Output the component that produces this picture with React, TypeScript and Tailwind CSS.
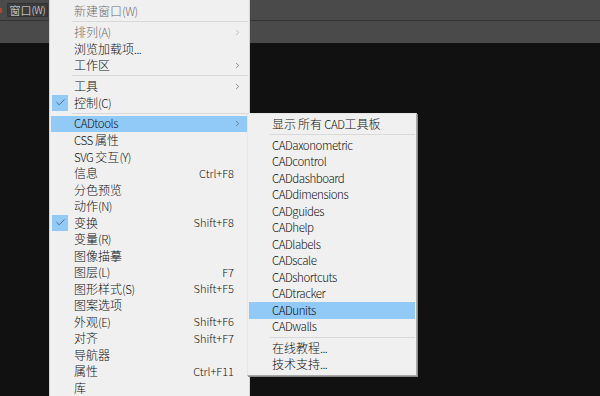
import { Check, ChevronRight } from "lucide-react";

type Item =
  | "sep"
  | {
      label: string;
      shortcut?: string;
      arrow?: boolean;
      disabled?: boolean;
      checked?: boolean;
      active?: boolean;
    };

const mainItems: Item[] = [
  { label: "新建窗口(W)", disabled: true },
  "sep",
  { label: "排列(A)", disabled: true, arrow: true },
  { label: "浏览加载项..." },
  { label: "工作区", arrow: true },
  "sep",
  { label: "工具", arrow: true },
  { label: "控制(C)", checked: true },
  "sep",
  { label: "CADtools", arrow: true, active: true },
  { label: "CSS 属性" },
  { label: "SVG 交互(Y)" },
  { label: "信息", shortcut: "Ctrl+F8" },
  { label: "分色预览" },
  { label: "动作(N)" },
  { label: "变换", shortcut: "Shift+F8", checked: true },
  { label: "变量(R)" },
  { label: "图像描摹" },
  { label: "图层(L)", shortcut: "F7" },
  { label: "图形样式(S)", shortcut: "Shift+F5" },
  { label: "图案选项" },
  { label: "外观(E)", shortcut: "Shift+F6" },
  { label: "对齐", shortcut: "Shift+F7" },
  { label: "导航器" },
  { label: "属性", shortcut: "Ctrl+F11" },
  { label: "库" },
];

const subItems: Item[] = [
  { label: "显示 所有 CAD工具板" },
  "sep",
  { label: "CADaxonometric" },
  { label: "CADcontrol" },
  { label: "CADdashboard" },
  { label: "CADdimensions" },
  { label: "CADguides" },
  { label: "CADhelp" },
  { label: "CADlabels" },
  { label: "CADscale" },
  { label: "CADshortcuts" },
  { label: "CADtracker" },
  { label: "CADunits", active: true },
  { label: "CADwalls" },
  "sep",
  { label: "在线教程..." },
  { label: "技术支持..." },
];

// CJK runs at 12px, latin runs a bit smaller and tighter (like YaHei UI)
function Label({ text }: { text: string }) {
  const parts = text.split(/([\u3000-\u9fff\uff00-\uffef]+)/).filter(Boolean);
  return (
    <>
      {parts.map((p, i) =>
        /[\u3000-\u9fff\uff00-\uffef]/.test(p) ? (
          <span key={i} className="text-[12px]">
            {p}
          </span>
        ) : (
          <span key={i} className="text-[11.5px] tracking-[-0.45px]">
            {p}
          </span>
        ),
      )}
    </>
  );
}

function MenuList({ items }: { items: Item[] }) {
  return (
    <>
      {items.map((item, i) => {
        if (item === "sep") {
          return (
            <div key={i} className="flex h-[4.5px] items-center pl-[22px] pr-[1px]">
              <div className="h-px w-full bg-[#d9d9d9]" />
            </div>
          );
        }
        return (
          <div
            key={i}
            className={`mx-[1px] flex h-[16.5px] items-center ${
              item.active ? "bg-[#91c9f7]" : ""
            } ${item.disabled ? "text-[#6d6d6d]" : "text-[#111]"}`}
          >
            <div className="flex w-[23px] justify-start pl-[1px]">
              {item.checked && (
                <div className="flex h-[16px] w-[16px] items-center justify-center bg-[#91c9f7]">
                  <Check size={11} strokeWidth={1.75} className="text-[#3d5670]" />
                </div>
              )}
            </div>
            <span className="flex-1 whitespace-nowrap">
              <Label text={item.label} />
            </span>
            {item.shortcut && (
              <span className="pr-[14px] text-[11px] whitespace-nowrap">{item.shortcut}</span>
            )}
            {item.arrow && (
              <ChevronRight
                size={9}
                strokeWidth={1.75}
                className={`mr-[6px] ${item.disabled ? "text-[#a6a6a6]" : "text-[#555]"}`}
              />
            )}
          </div>
        );
      })}
    </>
  );
}

export default function App() {
  return (
    <div
      className="relative h-[396px] w-[600px] overflow-hidden bg-[#111111] text-[11px] font-light leading-none"
      style={{ fontFamily: '"Noto Sans CJK SC", "Noto Sans", sans-serif' }}
    >
      <div className="flex h-[20px] items-center bg-[#4a4a4a] pl-[7px]">
        <div className="flex h-[14px] w-[41px] items-center justify-center rounded-[1px] border border-[#333] bg-[#3b3b3b] text-[10px] text-[#e6e6e6]">
          <span className="text-[11px]">窗口</span>
          <span className="tracking-[-0.3px]">(W)</span>
        </div>
      </div>
      <div className="h-px bg-[#333333]" />
      <div className="h-[22px] bg-[#4a4a4a]" />

      <div className="absolute left-0 top-[8px] h-[5px] w-[2px] bg-[#b8442e]" />

      <div className="absolute left-[49px] top-[-1px] w-[201px] border border-[#d4d4d4] bg-[#f0f0f0] pt-[3px]">
        <MenuList items={mainItems} />
      </div>

      <div className="absolute left-[247px] top-[113px] w-[170px] border border-t-[#e6e6e6] border-l-[#e6e6e6] border-r-[#a8a8a8] border-b-[#a8a8a8] bg-[#f0f0f0] pb-[2px] pt-[2px] shadow-[1px_1px_0_#8a8a8a]">
        <MenuList items={subItems} />
      </div>
    </div>
  );
}
